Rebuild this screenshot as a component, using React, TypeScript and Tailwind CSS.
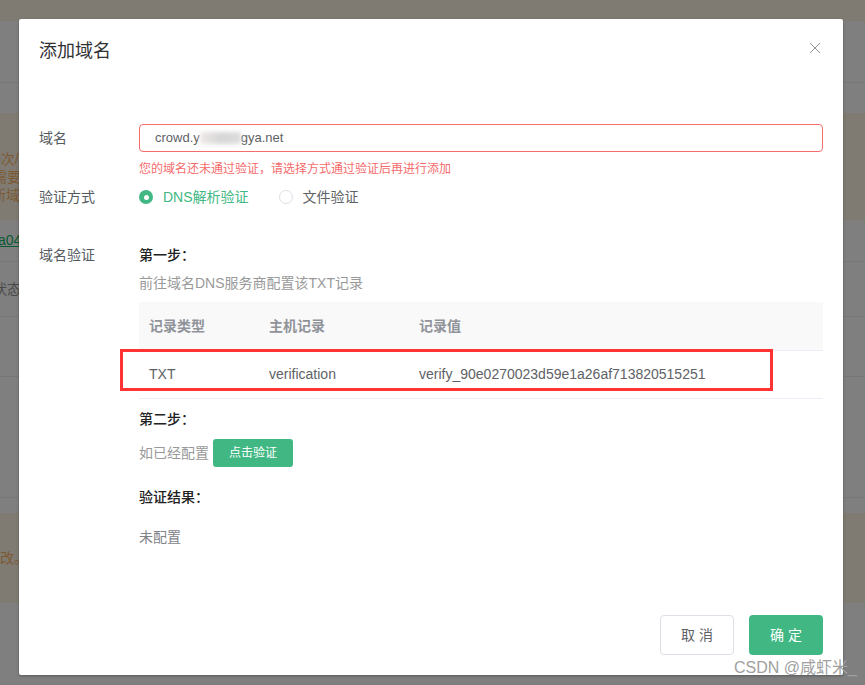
const FONT = "font-['Liberation_Sans','Noto_Sans_CJK_SC',sans-serif]";

const BRAND = 'bg-[#7f7b73]';
const PLAIN = 'bg-[#7f7f7f]';

function BackgroundPage() {
  return (
    <div className="flex flex-col h-[685px] bg-[#7f7f7f] text-[14px] overflow-hidden">
      <div className={`h-[21px] ${BRAND}`} />
      <div className={`h-[62px] ${PLAIN} border-b border-[#777777]`} />
      <div className={`h-[30px] ${PLAIN}`} />
      <div className={`h-[107px] ${BRAND} flex flex-col justify-center pt-[20px] text-[#7d5a32] leading-[18px] whitespace-nowrap`}>
        <div className="-ml-[7px]">0次/天</div>
        <div className="-ml-[7px]">需要</div>
        <div className="-ml-[8px]">新域名</div>
      </div>
      <div className={`h-[42px] ${PLAIN} border-b border-[#777777] flex items-center`}>
        <span className="-ml-[2px] text-[#0b5a34] underline">a04</span>
      </div>
      <div className={`h-[55px] ${PLAIN} border-b border-[#777777] flex items-center`}>
        <span className="-ml-[7px] text-[#4a4a4a]">状态</span>
      </div>
      <div className={`h-[60px] ${PLAIN} border-b border-[#777777]`} />
      <div className={`h-[121px] ${PLAIN} border-b border-[#777777]`} />
      <div className={`h-[15px] ${PLAIN}`} />
      <div className={`h-[90px] ${BRAND} flex items-center`}>
        <span className="text-[#7d5a32] whitespace-nowrap">改。</span>
      </div>
      <div className={`flex-1 ${PLAIN}`} />
    </div>
  );
}

function FormLabel({ children }: { children: React.ReactNode }) {
  return <div className="w-[100px] shrink-0 text-[14px] leading-[20px] text-[#555b61]">{children}</div>;
}

function Radio({ checked, label }: { checked?: boolean; label: string }) {
  return (
    <div className={`flex items-center gap-[10px] ${checked ? 'text-[#41b883]' : 'text-[#606266]'}`}>
      {checked ? (
        <span className="w-[14px] h-[14px] rounded-full bg-[#41b883] flex items-center justify-center">
          <span className="w-[5px] h-[5px] rounded-full bg-white" />
        </span>
      ) : (
        <span className="w-[14px] h-[14px] rounded-full border border-[#dcdfe6] bg-white" />
      )}
      <span>{label}</span>
    </div>
  );
}

function RecordTable() {
  return (
    <div className="mt-[9px] text-[14px]">
      <div className="flex items-center h-[49px] bg-[#f9f9f9] border-b border-[#ebeef5] text-[#909399] font-semibold">
        <div className="w-[120px] pl-[10px]">记录类型</div>
        <div className="w-[150px] pl-[10px]">主机记录</div>
        <div className="flex-1 pl-[10px]">记录值</div>
      </div>
      <div className="flex items-center h-[48px] pb-[1px] border-b border-[#ebeef5] text-[#606266]">
        <div className="w-[120px] pl-[10px]">TXT</div>
        <div className="w-[150px] pl-[10px]">verification</div>
        <div className="flex-1 pl-[10px]">verify_90e0270023d59e1a26af713820515251</div>
      </div>
    </div>
  );
}

export default function App() {
  return (
    <div className={`relative w-[865px] h-[685px] overflow-hidden ${FONT}`}>
      <BackgroundPage />

      <div className="absolute left-[19px] top-[19px] w-[824px] bg-white rounded-[2px] shadow-[0_1px_3px_rgba(0,0,0,0.3)] px-[20px] pb-[20px]">
        <div className="flex items-center justify-between h-[64px]">
          <h2 className="text-[18px] text-[#303133]">添加域名</h2>
          <svg width="12" height="12" viewBox="0 0 12 12" className="mr-[2px] -mt-[7px]" fill="none" stroke="#909399" strokeWidth="1">
            <path d="M1 1l10 10M11 1L1 11" />
          </svg>
        </div>

        <div className="flex items-center mt-[41px]">
          <FormLabel>域名</FormLabel>
          <div className="flex-1 h-[28px] border border-[#f56c6c] rounded-[4px] pl-[15px] flex items-center text-[13px] text-[#606266]">
            crowd.y
            <span className="w-[41px] h-[12px] bg-gradient-to-r from-[#f0e8e8] via-[#d6d6d6] to-[#dcdcdc] blur-[2px]" />
            gya.net
          </div>
        </div>
        <div className="ml-[100px] mt-[8px] h-[18px] text-[12px] leading-[18px] text-[#f56c6c]">
          您的域名还未通过验证，请选择方式通过验证后再进行添加
        </div>

        <div className="flex items-center mt-[8px] h-[22px]">
          <FormLabel>验证方式</FormLabel>
          <div className="flex items-center gap-[30px] text-[14px]">
            <Radio checked label="DNS解析验证" />
            <Radio label="文件验证" />
          </div>
        </div>

        <div className="flex mt-[37px]">
          <FormLabel>域名验证</FormLabel>
          <div className="flex-1 text-[14px] leading-[20px]">
            <div className="text-[#222222] font-medium">第一步：</div>
            <div className="mt-[8px] text-[#999999]">前往域名DNS服务商配置该TXT记录</div>
            <RecordTable />
            <div className="mt-[10px] text-[#222222] font-medium">第二步：</div>
            <div className="mt-[10px] flex items-center gap-[4px] text-[#999999]">
              <span>如已经配置</span>
              <button className="w-[80px] h-[28px] rounded-[3px] bg-[#41b883] text-white text-[12px]">点击验证</button>
            </div>
            <div className="mt-[20px] text-[#222222] font-medium">验证结果：</div>
            <div className="mt-[20px] text-[#7f8388]">未配置</div>
          </div>
        </div>

        <div className="flex justify-end gap-[15px] mt-[68px]">
          <button className="w-[74px] h-[40px] rounded-[4px] border border-[#dcdfe6] bg-white text-[14px] text-[#606266]">取 消</button>
          <button className="w-[74px] h-[40px] rounded-[4px] bg-[#41b883] text-[14px] text-white">确 定</button>
        </div>
      </div>

      {/* annotation drawn on top of the screenshot */}
      <div className="absolute left-[120px] top-[349px] w-[653px] h-[42px] border-[3px] border-[#ff3333]" />
      <div className="absolute left-[734px] top-[659px] text-[16px] leading-[18px] text-[#a0a0a0] whitespace-nowrap">CSDN @咸虾米_</div>
    </div>
  );
}
